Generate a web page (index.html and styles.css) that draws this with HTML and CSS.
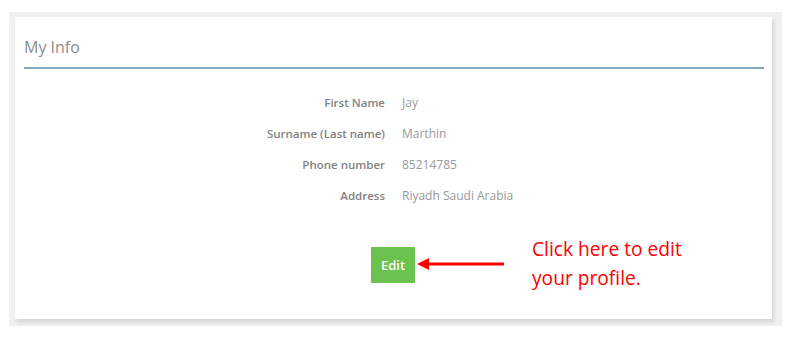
FILE: index.html
```html
<!DOCTYPE html>
<html lang="en">

<head>
    <meta charset="UTF-8">
    <title>My Info</title>
    <link rel="stylesheet" href="styles.css">
</head>

<body>

    <div class="frame">
        <div class="card">
            <h2 class="card-title">My Info</h2>

            <div class="info-list">
                <span class="info-label">First Name</span>
                <span class="info-value">Jay</span>

                <span class="info-label">Surname (Last name)</span>
                <span class="info-value">Marthin</span>

                <span class="info-label">Phone number</span>
                <span class="info-value">85214785</span>

                <span class="info-label">Address</span>
                <span class="info-value">Riyadh Saudi Arabia</span>
            </div>

            <div class="actions">
                <button class="edit-btn">Edit</button>
                <svg class="arrow" width="88" height="14" viewBox="0 0 88 14">
                    <line x1="10" y1="7" x2="87" y2="7" stroke="#f00" stroke-width="3" />
                    <polygon points="0,7 12,1 12,13" fill="#f00" />
                </svg>
                <p class="note">Click here to edit<br>your profile.</p>
            </div>
        </div>
    </div>

</body>

</html>
```

FILE: styles.css
```css
body,
html {
    margin: 0;
    padding: 0;
    background: #fff;
}

.frame {
    margin: 12px 0 0 9px;
    width: 773px;
    height: 314px;
    background: #f0f0f0;
    padding: 5px 0 0 6px;
    box-sizing: border-box;
}

.card {
    width: 757px;
    height: 302px;
    background: #fff;
    box-shadow: 2px 3px 4px rgba(0, 0, 0, 0.12);
    padding: 0 8px 0 9px;
    box-sizing: border-box;
    font-family: "Open Sans", sans-serif;
}

.card-title {
    margin: 0;
    padding-top: 19px;
    height: 31px;
    font-size: 16px;
    font-weight: normal;
    line-height: 22px;
    color: #8c8c8c;
    border-bottom: 2px solid #82a6bc;
}

.info-list {
    display: grid;
    grid-template-columns: 361px auto;
    column-gap: 17px;
    grid-auto-rows: 31px;
    align-items: center;
    margin-top: 18px;
}

.info-label {
    text-align: right;
    font-size: 11.5px;
    font-weight: 600;
    color: #828282;
}

.info-value {
    font-size: 12px;
    color: #9a9a9a;
}

.actions {
    display: flex;
    align-items: center;
    margin-top: 27px;
    padding-left: 347px;
}

.edit-btn {
    width: 44px;
    height: 36px;
    border: none;
    background: #6cc24f;
    color: #fff;
    font-family: "Open Sans", sans-serif;
    font-size: 13px;
    font-weight: 600;
    padding: 0;
}

.arrow {
    margin-left: 2px;
    margin-top: -3px;
}

.note {
    margin: -4px 0 0 27px;
    font-family: "Open Sans", sans-serif;
    font-size: 19.2px;
    line-height: 29px;
    color: #f00;
}
```
